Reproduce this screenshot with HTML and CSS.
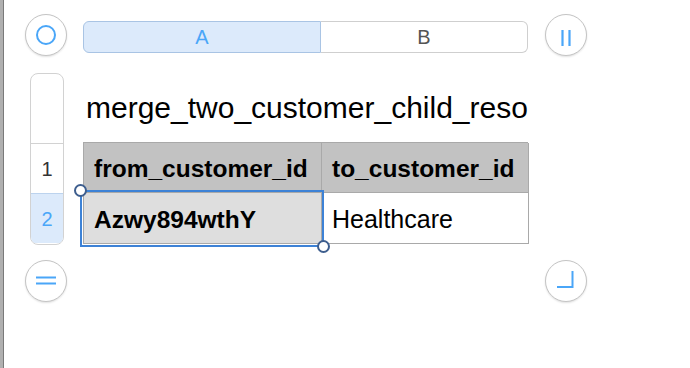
FILE: index.html
```html
<!DOCTYPE html>
<html>
<head>
<meta charset="utf-8">
<link rel="stylesheet" href="styles.css">
</head>
<body>
<div class="frame">
  <div class="grid">
    <div class="circ tl">
      <svg width="42" height="42" viewBox="0 0 42 42"><circle cx="21" cy="21" r="9" fill="none" stroke="#4aa6f8" stroke-width="2"/></svg>
    </div>
    <div class="seg">
      <div class="seg-a">A</div>
      <div class="seg-b">B</div>
    </div>
    <div class="circ tr">
      <svg width="42" height="42" viewBox="0 0 42 42"><path d="M17.5 16v16M24.5 16v16" stroke="#4aa6f8" stroke-width="2.2"/></svg>
    </div>

    <div class="rows">
      <div class="rh-top"></div>
      <div class="rh">1</div>
      <div class="rh sel">2</div>
    </div>
    <div class="main">
      <div class="title">merge_two_customer_child_reso</div>
      <div class="table">
        <div class="th">from_customer_id</div>
        <div class="th">to_customer_id</div>
        <div class="td selected"><span>Azwy894wthY</span>
          <div class="selbox"><i class="h h1"></i><i class="h h2"></i></div>
        </div>
        <div class="td">Healthcare</div>
      </div>
    </div>
    <div></div>

    <div class="circ bl">
      <svg width="42" height="42" viewBox="0 0 42 42"><path d="M11 17.5h20M11 23.5h20" stroke="#4aa6f8" stroke-width="2"/></svg>
    </div>
    <div></div>
    <div class="circ br">
      <svg width="42" height="42" viewBox="0 0 42 42"><path d="M27.5 11v17M12 27h16.5" stroke="#4aa6f8" stroke-width="2"/></svg>
    </div>
  </div>
</div>
</body>
</html>
```
FILE: styles.css
```css
html, body {
  margin: 0;
  padding: 0;
  background: #fff;
  font-family: "Liberation Sans", Arial, sans-serif;
}
.frame {
  width: 690px;
  height: 368px;
  box-sizing: border-box;
  border-left: 3px solid #b0b0b0;
  box-shadow: inset 1px 0 0 #7a7a7a;
  overflow: hidden;
}
.grid {
  display: grid;
  grid-template-columns: 42px 445px 42px;
  grid-template-rows: 43px 171px 42px;
  column-gap: 16px;
  row-gap: 16px;
  padding: 14px 0 0 22px;
}
.grid > .circ:nth-child(3), .grid > .circ.br { margin-left: 1px; }
.circ {
  width: 42px;
  height: 42px;
  box-sizing: border-box;
  border: 1.5px solid #c4c4c4;
  border-radius: 50%;
  box-shadow: 0 1px 2px rgba(0,0,0,0.12);
  position: relative;
  background: #fff;
}
.circ svg {
  position: absolute;
  left: -1.5px;
  top: -1.5px;
}
.seg {
  margin-top: 7px;
  height: 32px;
  display: flex;
  font-size: 20px;
}
.seg-a {
  width: 238px;
  box-sizing: border-box;
  background: #dceafb;
  border: 1px solid #a9c4e4;
  border-radius: 6px 0 0 6px;
  color: #4aa6f8;
  display: flex;
  align-items: center;
  justify-content: center;
}
.seg-b {
  flex: 1;
  box-sizing: border-box;
  border: 1px solid #cfcfcf;
  border-left: none;
  border-radius: 0 6px 6px 0;
  color: #555;
  display: flex;
  align-items: center;
  justify-content: center;
}
.rows {
  justify-self: center;
  width: 34px;
  margin-left: 2px;
  box-sizing: border-box;
  border: 1px solid #d2d2d2;
  border-radius: 8px;
  overflow: hidden;
  display: flex;
  flex-direction: column;
  height: 172px;
}
.rh-top { height: 69px; border-bottom: 1px solid #d2d2d2; }
.rh {
  height: 50px;
  display: flex;
  align-items: center;
  justify-content: center;
  font-size: 20px;
  color: #333;
  border-bottom: 1px solid #d2d2d2;
  padding-top: 2px;
  box-sizing: border-box;
}
.rh.sel {
  background: #dceafb;
  color: #4aa6f8;
  border-bottom: none;
  border-top: 1px solid #bcd3ee;
  margin-top: -1px;
}
.main {
  display: flex;
  flex-direction: column;
}
.title {
  height: 70px;
  font-size: 30px;
  color: #000;
  padding-left: 3px;
  line-height: 1;
  padding-top: 20px;
  box-sizing: border-box;
  white-space: nowrap;
}
.table {
  display: grid;
  grid-template-columns: 238px 207px;
  grid-template-rows: 50px 51px;
  border-top: 1px solid #a9a9a9;
  border-left: 1px solid #a9a9a9;
  width: 445px;
  box-sizing: border-box;
}
.th, .td {
  border-right: 1px solid #a9a9a9;
  border-bottom: 1px solid #a9a9a9;
  display: flex;
  align-items: center;
  padding-left: 10px;
  padding-top: 3px;
  font-size: 25px;
  color: #000;
  white-space: nowrap;
}
.th {
  background: #c2c2c2;
  font-weight: bold;
  font-size: 24.5px;
}
.td.selected {
  background: #dedede;
  font-weight: bold;
  font-size: 24.5px;
  position: relative;
}
.selbox {
  position: absolute;
  left: -4px;
  top: -3px;
  right: -3px;
  bottom: -4px;
  border: 2px solid #3d82d6;
}
.h {
  position: absolute;
  width: 9px;
  height: 9px;
  border: 2px solid #3e5e8e;
  border-radius: 50%;
  background: #fff;
}
.h1 { left: -8px; top: -8px; }
.h2 { right: -8px; bottom: -8px; }
```
